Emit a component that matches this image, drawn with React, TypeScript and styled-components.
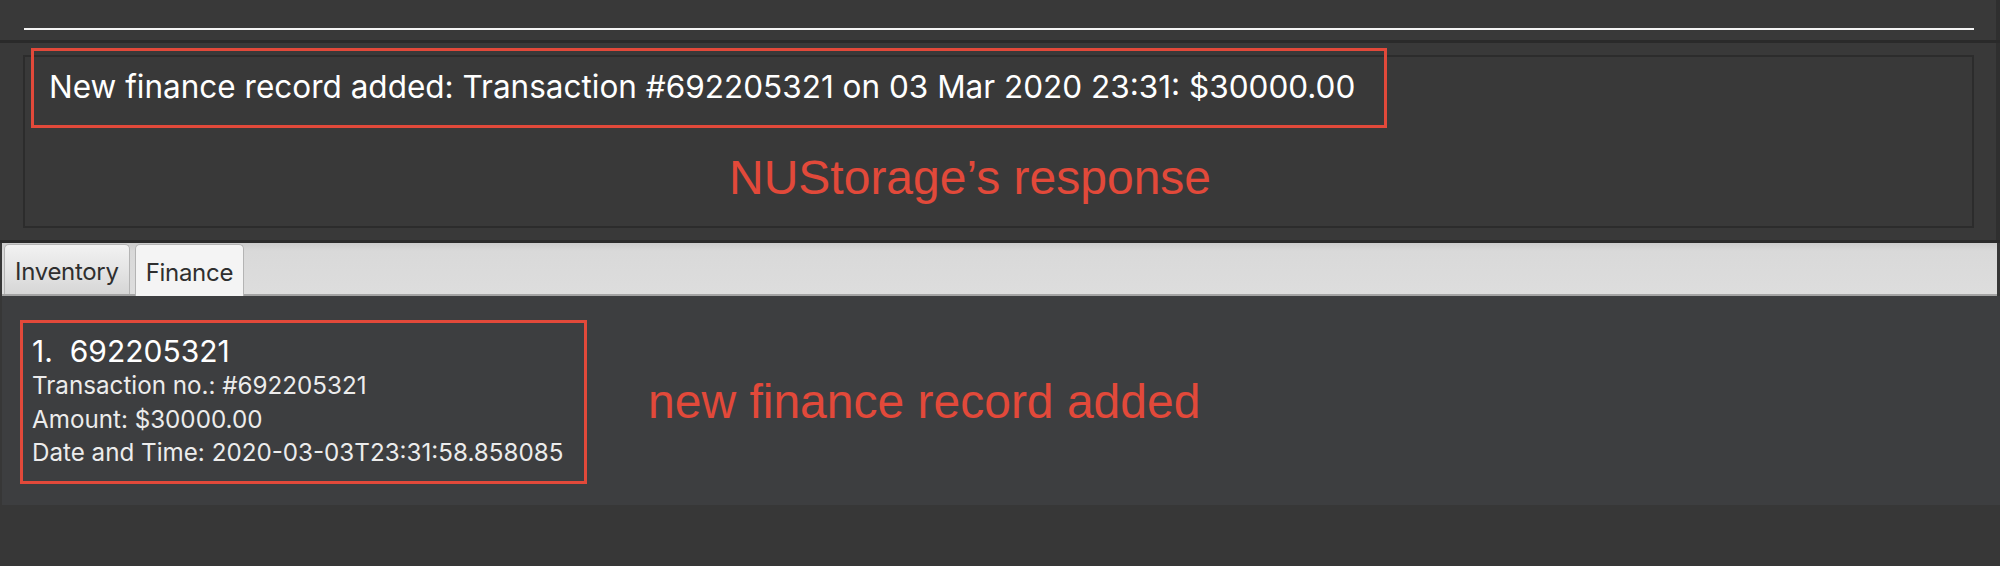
import React from "react";
import styled, { createGlobalStyle } from "styled-components";

const GlobalStyle = createGlobalStyle`
  html, body {
    margin: 0;
    padding: 0;
    background: #373737;
  }
  * { box-sizing: border-box; }
`;

const UI_FONT = `"Inter", "Noto Sans", sans-serif`;
const NOTE_FONT = `"Liberation Sans", Arial, sans-serif`;
const RED = "#e2493a";

const Window = styled.div`
  width: 2000px;
  height: 566px;
  display: flex;
  flex-direction: column;
  background: #373737;
  overflow: hidden;
`;

const CommandSection = styled.div`
  height: 40px;
  display: flex;
  padding: 28px 22px 0 24px;
  background: #393939;
  border-right: 4px solid #2f2f2f;
`;

const CommandField = styled.div`
  flex: 1;
  height: 2px;
  background: #f4f4f4;
`;

const Divider = styled.div`
  height: 3px;
  background: #2a2a2a;
`;

const ResultSection = styled.div`
  position: relative;
  height: 197px;
  padding: 12px 22px 0 23px;
  background: #393939;
  border-right: 4px solid #2f2f2f;
`;

const ResultBox = styled.div`
  height: 173px;
  border: 2px solid #2c2c2c;
  padding: 12px 24px 0;
  color: #ffffff;
  font-family: ${UI_FONT};
  font-size: 31.5px;
  line-height: 36px;
  white-space: nowrap;
`;

const AnnotationBox = styled.div<{ $left: number; $top: number; $w: number; $h: number }>`
  position: absolute;
  left: ${(p) => p.$left}px;
  top: ${(p) => p.$top}px;
  width: ${(p) => p.$w}px;
  height: ${(p) => p.$h}px;
  border: 3px solid ${RED};
  pointer-events: none;
`;

const AnnotationText = styled.div`
  color: ${RED};
  font-family: ${NOTE_FONT};
  font-size: 48px;
  line-height: 48px;
  white-space: nowrap;
`;

const FloatingNote = styled(AnnotationText)<{ $left: number; $top: number }>`
  position: absolute;
  left: ${(p) => p.$left}px;
  top: ${(p) => p.$top}px;
`;

const TabBar = styled.div`
  height: 53px;
  display: flex;
  align-items: flex-end;
  gap: 5px;
  padding-left: 2px;
  margin-left: 2px;
  margin-right: 3px;
  background: linear-gradient(#cbcbcb 0px, #d9d9d9 8px, #dddddd 100%);
  border-bottom: 2px solid #a3a3a3;
`;

const Tab = styled.div<{ $active?: boolean }>`
  height: ${(p) => (p.$active ? 52 : 50)}px;
  margin-bottom: ${(p) => (p.$active ? -2 : 0)}px;
  padding: 4px 10px 0 10px;
  display: flex;
  align-items: center;
  border: 1px solid #b4b4b4;
  border-bottom: none;
  border-radius: 5px 5px 0 0;
  background: ${(p) =>
    p.$active
      ? "#f4f4f4"
      : "linear-gradient(#f2f2f2, #e2e2e2 60%, #d6d6d6)"};
  color: #2f2f2f;
  font-family: ${UI_FONT};
  font-size: 24px;
  letter-spacing: -0.3px;
`;

const ListArea = styled.div`
  height: 209px;
  margin-left: 2px;
  padding: 24px 0 0 18px;
  background: #3d3e40;
  display: flex;
  align-items: flex-start;
`;

const ListRow = styled.div`
  display: flex;
  align-items: center;
  gap: 61px;
`;

const CardFrame = styled.div`
  width: 567px;
  height: 164px;
  border: 3px solid ${RED};
  padding: 11px 0 0 9px;
`;

const CardTitle = styled.div`
  color: #ffffff;
  font-family: ${UI_FONT};
  font-size: 30px;
  line-height: 35px;
  white-space: nowrap;
`;

const CardLine = styled.div`
  color: #ececec;
  font-family: ${UI_FONT};
  font-size: 24.2px;
  line-height: 33.5px;
  white-space: nowrap;
`;

export default function App() {
  return (
    <>
      <GlobalStyle />
      <Window>
        <CommandSection>
          <CommandField />
        </CommandSection>
        <Divider />
        <ResultSection>
          <ResultBox>
            New finance record added: Transaction #692205321 on 03 Mar 2020 23:31: $30000.00
          </ResultBox>
          <AnnotationBox $left={31} $top={5} $w={1356} $h={80} />
          <FloatingNote $left={729} $top={111}>NUStorage’s response</FloatingNote>
        </ResultSection>
        <Divider />
        <TabBar>
          <Tab>Inventory</Tab>
          <Tab $active>Finance</Tab>
        </TabBar>
        <ListArea>
          <ListRow>
            <CardFrame>
              <CardTitle>1.&nbsp;&nbsp;692205321</CardTitle>
              <CardLine>Transaction no.: #692205321</CardLine>
              <CardLine>Amount: $30000.00</CardLine>
              <CardLine>Date and Time: 2020-03-03T23:31:58.858085</CardLine>
            </CardFrame>
            <AnnotationText>new finance record added</AnnotationText>
          </ListRow>
        </ListArea>
      </Window>
    </>
  );
}
